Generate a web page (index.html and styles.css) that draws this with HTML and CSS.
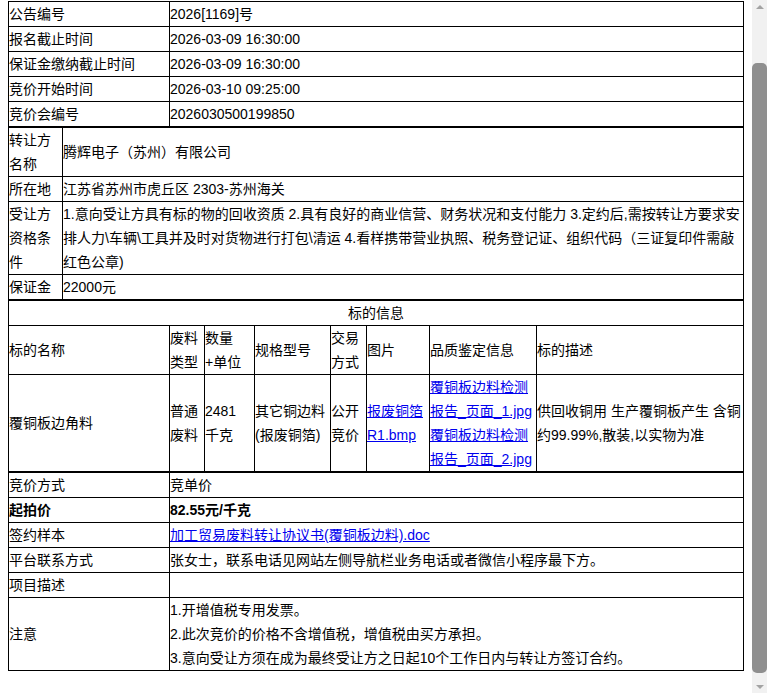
FILE: index.html
```html
<!DOCTYPE html>
<html lang="zh-CN">
<head>
<meta charset="utf-8">
<title>竞价公告</title>
<link rel="stylesheet" href="styles.css">
</head>
<body>
<div class="page">
  <table class="grid">
    <colgroup><col class="c-label"><col></colgroup>
    <tr><td>公告编号</td><td>2026[1169]号</td></tr>
    <tr><td>报名截止时间</td><td>2026-03-09 16:30:00</td></tr>
    <tr><td>保证金缴纳截止时间</td><td>2026-03-09 16:30:00</td></tr>
    <tr><td>竞价开始时间</td><td>2026-03-10 09:25:00</td></tr>
    <tr><td>竞价会编号</td><td>2026030500199850</td></tr>
  </table>
  <table class="grid">
    <colgroup><col class="c-short"><col></colgroup>
    <tr><td>转让方名称</td><td>腾辉电子（苏州）有限公司</td></tr>
    <tr><td>所在地</td><td>江苏省苏州市虎丘区 2303-苏州海关</td></tr>
    <tr><td>受让方资格条件</td><td>1.意向受让方具有标的物的回收资质 2.具有良好的商业信营、财务状况和支付能力 3.定约后,需按转让方要求安排人力\车辆\工具并及时对货物进行打包\清运 4.看样携带营业执照、税务登记证、组织代码（三证复印件需敲红色公章)</td></tr>
    <tr><td>保证金</td><td>22000元</td></tr>
  </table>
  <table class="grid">
    <colgroup>
      <col class="c-label"><col class="c-type"><col class="c-qty"><col class="c-spec"><col class="c-mode"><col class="c-pic"><col class="c-qual"><col>
    </colgroup>
    <tr><td colspan="8" class="center">标的信息</td></tr>
    <tr><td>标的名称</td><td>废料类型</td><td>数量<br>+单位</td><td>规格型号</td><td>交易方式</td><td>图片</td><td>品质鉴定信息</td><td>标的描述</td></tr>
    <tr>
      <td>覆铜板边角料</td>
      <td>普通废料</td>
      <td>2481<br>千克</td>
      <td>其它铜边料(报废铜箔)</td>
      <td>公开竞价</td>
      <td><a href="#">报废铜箔R1.bmp</a></td>
      <td><a href="#">覆铜板边料检测报告_页面_1.jpg</a><br><a href="#">覆铜板边料检测报告_页面_2.jpg</a></td>
      <td>供回收铜用 生产覆铜板产生 含铜约99.99%,散装,以实物为准</td>
    </tr>
  </table>
  <table class="grid">
    <colgroup><col class="c-label"><col></colgroup>
    <tr><td>竞价方式</td><td>竞单价</td></tr>
    <tr class="bold"><td>起拍价</td><td>82.55元/千克</td></tr>
    <tr><td>签约样本</td><td><a href="#">加工贸易废料转让协议书(覆铜板边料).doc</a></td></tr>
    <tr><td>平台联系方式</td><td>张女士，联系电话见网站左侧导航栏业务电话或者微信小程序最下方。</td></tr>
    <tr><td>项目描述</td><td></td></tr>
    <tr><td>注意</td><td>1.开增值税专用发票。<br>2.此次竞价的价格不含增值税，增值税由买方承担。<br>3.意向受让方须在成为最终受让方之日起10个工作日内与转让方签订合约。</td></tr>
  </table>
</div>
<div class="scrollbar" aria-hidden="true">
  <div class="sb-btn"><span class="sb-arrow up"></span></div>
  <div class="sb-track"><div class="sb-thumb"></div></div>
  <div class="sb-btn"><span class="sb-arrow down"></span></div>
</div>
</body>
</html>
```

FILE: styles.css
```css
body {
  margin: 1px 23px 8px 8px;
  font-family: "Liberation Sans", "Noto Sans CJK SC", sans-serif;
  font-size: 14px;
  line-height: 24px;
  color: #000;
  background: #fff;
}
.grid {
  width: 100%;
  border-collapse: collapse;
  table-layout: fixed;
  border: 1px solid #000;
}
.grid td {
  border: 1px solid #000;
  padding: 0;
  vertical-align: middle;
  text-align: left;
  line-height: 24px;
  word-wrap: break-word;
}
.grid td.center {
  text-align: center;
}
.grid .bold td {
  font-weight: bold;
}
.grid a {
  color: #0000ee;
  text-decoration: underline;
}
.c-label { width: 161px; }
.c-short { width: 54px; }
.c-type { width: 35px; }
.c-qty { width: 50px; }
.c-spec { width: 76px; }
.c-mode { width: 36px; }
.c-pic { width: 63px; }
.c-qual { width: 107px; }

/* window scrollbar */
.scrollbar {
  position: fixed;
  top: 0;
  right: 0;
  bottom: 0;
  width: 15px;
  background: #f1f1f1;
  display: flex;
  flex-direction: column;
  align-items: center;
}
.sb-btn {
  height: 15px;
  width: 15px;
  display: flex;
  align-items: center;
  justify-content: center;
}
.sb-arrow {
  width: 0;
  height: 0;
  border-left: 4px solid transparent;
  border-right: 4px solid transparent;
}
.sb-arrow.up {
  border-bottom: 4px solid #a3a3a3;
  margin-top: -1px;
}
.sb-arrow.down {
  border-top: 4px solid #a3a3a3;
  margin-top: 2px;
}
.sb-track {
  flex: 1;
  width: 15px;
  display: flex;
  justify-content: center;
  padding: 48px 0 5px;
  box-sizing: border-box;
}
.sb-thumb {
  width: 9px;
  flex: 1;
  background: #8f8f8f;
  border-radius: 5px;
}
```
